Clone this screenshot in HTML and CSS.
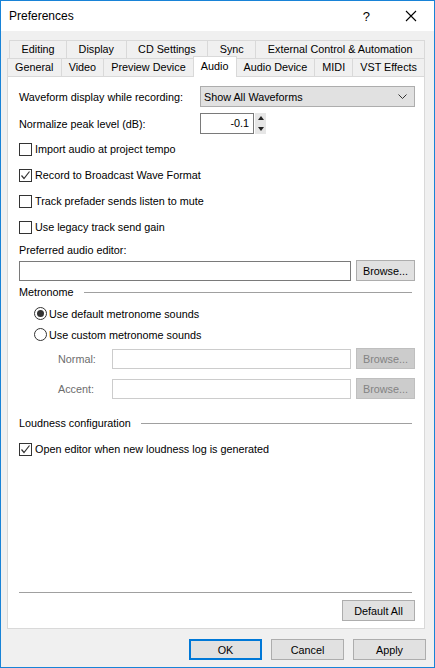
FILE: index.html
```html
<!DOCTYPE html>
<html lang="en">
  <head>
    <meta charset="UTF-8" />
    <title>Preferences</title>
    <link rel="stylesheet" href="styles.css">
  </head>
  <body>
    <div class="window">
      <div class="titlebar">
        <span class="title">Preferences</span>
        <span class="help">?</span>
        <svg class="close" width="12" height="12" viewBox="0 0 12 12">
          <path d="M1 1 L11 11 M11 1 L1 11" stroke="#000" stroke-width="1.1" fill="none" />
        </svg>
      </div>

      <div class="tabs">
        <div class="tab-row back">
          <div class="tab">Editing</div>
          <div class="tab">Display</div>
          <div class="tab">CD Settings</div>
          <div class="tab">Sync</div>
          <div class="tab">External Control &amp; Automation</div>
        </div>
        <div class="tab-row front">
          <div class="tab">General</div>
          <div class="tab">Video</div>
          <div class="tab">Preview Device</div>
          <div class="tab selected">Audio</div>
          <div class="tab">Audio Device</div>
          <div class="tab">MIDI</div>
          <div class="tab">VST Effects</div>
        </div>
      </div>

      <div class="panel">
        <div class="row select-row">
          <span class="field-label">Waveform display while recording:</span>
          <div class="combo">
            <span>Show All Waveforms</span>
            <svg width="9" height="5" viewBox="0 0 9 5">
              <polyline points="0.5,0.5 4.5,4.5 8.5,0.5" stroke="#333" stroke-width="1" fill="none" />
            </svg>
          </div>
        </div>

        <div class="row spin-row">
          <span class="field-label">Normalize peak level (dB):</span>
          <div class="spin-box">-0.1</div>
          <div class="spin-buttons">
            <div class="spin-up"></div>
            <div class="spin-down"></div>
          </div>
        </div>

        <div class="checks">
          <label class="check-row"><span class="checkbox"></span>Import audio at project tempo</label>
          <label class="check-row"><span class="checkbox checked"><svg width="11" height="11" viewBox="0 0 11 11"><polyline points="1.5,5.5 4,8.5 9.5,1.5" stroke="#333" stroke-width="1.2" fill="none" /></svg></span>Record to Broadcast Wave Format</label>
          <label class="check-row"><span class="checkbox"></span>Track prefader sends listen to mute</label>
          <label class="check-row"><span class="checkbox"></span>Use legacy track send gain</label>
        </div>

        <div class="caption">Preferred audio editor:</div>
        <div class="row path-row">
          <div class="textbox"></div>
          <button class="btn browse">Browse...</button>
        </div>

        <div class="group-head metronome">Metronome</div>
        <div class="radios">
          <label class="radio-row"><span class="radio on"></span>Use default metronome sounds</label>
          <label class="radio-row"><span class="radio"></span>Use custom metronome sounds</label>
        </div>

        <div class="row sound-row first">
          <span class="sound-label">Normal:</span>
          <div class="textbox disabled"></div>
          <button class="btn browse" disabled>Browse...</button>
        </div>
        <div class="row sound-row">
          <span class="sound-label">Accent:</span>
          <div class="textbox disabled"></div>
          <button class="btn browse" disabled>Browse...</button>
        </div>

        <div class="group-head loudness">Loudness configuration</div>
        <label class="check-row loud-check"><span class="checkbox checked"><svg width="11" height="11" viewBox="0 0 11 11"><polyline points="1.5,5.5 4,8.5 9.5,1.5" stroke="#333" stroke-width="1.2" fill="none" /></svg></span>Open editor when new loudness log is generated</label>

        <div class="spacer"></div>
        <div class="separator"></div>
        <div class="row default-row">
          <button class="btn">Default All</button>
        </div>
      </div>

      <div class="dialog-buttons">
        <button class="btn wide default">OK</button>
        <button class="btn wide">Cancel</button>
        <button class="btn wide">Apply</button>
      </div>
    </div>
  </body>
</html>
```

FILE: styles.css
```css
/* Window frame */
body {
  margin: 0;
  font-family: "Liberation Sans", Arial, sans-serif;
  font-size: 10.8px;
  color: #000;
  background: #fff;
}

.window {
  width: 435px;
  height: 668px;
  box-sizing: border-box;
  border: 1px solid #1883d7;
  background-color: #f0f0f0;
  display: flex;
  flex-direction: column;
}

/* Title bar */
.titlebar {
  height: 30px;
  background-color: #fff;
  display: flex;
  align-items: center;
  padding-left: 8px;
  flex-shrink: 0;
}

.title {
  font-size: 12px;
  flex: 1;
}

.help {
  font-size: 13px;
  margin-right: 35px;
}

.close {
  margin-right: 17px;
}

/* Tabs */
.tabs {
  padding: 9px 9px 0 6px;
}

.tab-row {
  display: flex;
  height: 18px;
}

.tab-row.back {
  margin-left: 2px;
}

.tab {
  flex: 1 1 auto;
  text-align: center;
  line-height: 17px;
  border-top: 1px solid #d9d9d9;
  border-left: 1px solid #d9d9d9;
  white-space: nowrap;
}

.tab:last-child {
  border-right: 1px solid #d9d9d9;
}

.tab.selected {
  background-color: #fff;
  margin: -2px 0 -1px;
  padding-bottom: 1px;
  line-height: 18px;
  border-right: 1px solid #d9d9d9;
  position: relative;
  z-index: 1;
}

.tab.selected + .tab {
  border-left: none;
}

/* Tab page */
.panel {
  height: 553px;
  box-sizing: border-box;
  margin: 0 9px 0 6px;
  background-color: #fff;
  border: 1px solid #d9d9d9;
  padding: 9px 9px 7px 11px;
  display: flex;
  flex-direction: column;
}

.row {
  display: flex;
  align-items: center;
}

.select-row {
  height: 21px;
}

.field-label {
  width: 181px;
}

.combo {
  flex: 1;
  height: 21px;
  box-sizing: border-box;
  background-color: #e1e1e1;
  border: 1px solid #adadad;
  display: flex;
  align-items: center;
  justify-content: space-between;
  padding: 0 7px 0 3px;
}

.spin-row {
  height: 21px;
  margin-top: 6px;
}

.spin-box {
  width: 54px;
  height: 21px;
  box-sizing: border-box;
  border: 1px solid #7a7a7a;
  text-align: right;
  padding-right: 4px;
  line-height: 19px;
}

.spin-buttons {
  width: 11px;
  height: 21px;
  margin-left: 1px;
  background-color: #e6e6e6;
  display: flex;
  flex-direction: column;
  justify-content: space-around;
  align-items: center;
}

.spin-up {
  border-left: 3px solid transparent;
  border-right: 3px solid transparent;
  border-bottom: 4px solid #222;
}

.spin-down {
  border-left: 3px solid transparent;
  border-right: 3px solid transparent;
  border-top: 4px solid #222;
}

/* Checkboxes and radios */
.checks {
  margin-top: 2px;
}

.check-row {
  height: 26px;
  display: flex;
  align-items: center;
}

.checkbox {
  width: 13px;
  height: 13px;
  box-sizing: border-box;
  border: 1px solid #333;
  background-color: #fff;
  margin-right: 3px;
  display: flex;
  align-items: center;
  justify-content: center;
}

.caption {
  height: 18px;
  line-height: 16px;
  margin-top: 2px;
}

.path-row {
  height: 21px;
}

.textbox {
  flex: 1;
  height: 20px;
  box-sizing: border-box;
  border: 1px solid #7a7a7a;
  background-color: #fff;
}

.textbox.disabled {
  border-color: #cccccc;
}

.btn {
  font-family: inherit;
  font-size: 10.8px;
  color: #000;
  background-color: #e1e1e1;
  border: 1px solid #adadad;
  height: 21px;
  padding: 0;
}

.browse {
  width: 59px;
  margin-left: 5px;
}

.btn:disabled {
  background-color: #cccccc;
  border-color: #bfbfbf;
  color: #838383;
}

/* Group headings with rule */
.group-head {
  height: 18px;
  display: flex;
  align-items: center;
}

.group-head::after {
  content: "";
  flex: 1;
  height: 1px;
  background-color: #a0a0a0;
  margin: 1px 3px 0 10px;
}

.metronome {
  margin-top: 2px;
}

.radios {
  margin-top: 2px;
  padding-left: 15px;
}

.radio-row {
  height: 21px;
  display: flex;
  align-items: center;
}

.radio {
  width: 13px;
  height: 13px;
  box-sizing: border-box;
  border: 1px solid #333;
  border-radius: 50%;
  margin-right: 2px;
  display: flex;
  align-items: center;
  justify-content: center;
}

.radio.on::after {
  content: "";
  width: 7px;
  height: 7px;
  border-radius: 50%;
  background-color: #333;
}

.sound-row {
  height: 21px;
  margin-top: 9px;
}

.sound-row.first {
  margin-top: 3px;
}

.sound-label {
  width: 54px;
  padding-left: 39px;
  color: #6d6d6d;
}

.loudness {
  margin-top: 15px;
}

.loud-check {
  margin-top: 4px;
}

.spacer {
  flex: 1;
}

.separator {
  height: 1px;
  background-color: #a0a0a0;
  margin-right: 3px;
}

.default-row {
  justify-content: flex-end;
  margin-top: 7px;
}

.default-row .btn {
  width: 73px;
}

/* Dialog buttons */
.dialog-buttons {
  display: flex;
  justify-content: flex-end;
  gap: 9px;
  padding: 10px 8px 0 0;
}

.wide {
  width: 73px;
  height: 21px;
}

.wide.default {
  border: 2px solid #0078d7;
}
```
